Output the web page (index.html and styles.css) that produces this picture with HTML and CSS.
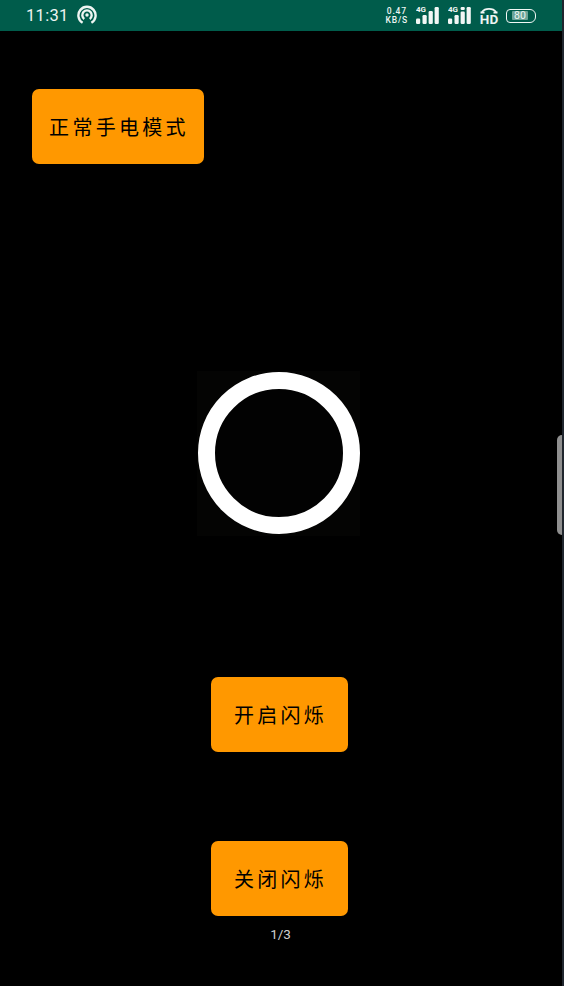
FILE: index.html
```html
<!DOCTYPE html>
<html lang="zh">
<head>
<meta charset="utf-8">
<title>手电</title>
<link rel="stylesheet" href="styles.css">
</head>
<body>
<div class="screen">
  <header class="status">
    <div class="status-left">
      <span class="time">11:31</span>
      <svg class="hotspot" width="20" height="20" viewBox="0 0 20 20" fill="none" stroke="#eef5f2" stroke-width="2.400">
        <path d="M5.600 17.800A8.600 8.600 0 1 1 14.400 17.800"/>
        <path d="M7.300 13.900A4.700 4.700 0 1 1 12.700 13.900"/>
        <circle cx="10" cy="10" r="1.700" fill="#eef5f2" stroke="none"/>
      </svg>
    </div>
    <div class="status-right">
      <div class="speed"><span>0.47</span><span>KB/S</span></div>
      <svg class="signal" width="23" height="18" viewBox="0 0 23 18" fill="#f2f7f5">
        <text x="0" y="6" class="net">4G</text>
        <rect x="0" y="12.500" width="4.200" height="5.500" rx="1.200"/>
        <rect x="6.500" y="9" width="4.200" height="9" rx="1.200"/>
        <rect x="12.600" y="5" width="4.200" height="13" rx="1.200"/>
        <rect x="18.600" y="1" width="4.200" height="17" rx="1.200"/>
      </svg>
      <svg class="signal" width="23" height="18" viewBox="0 0 23 18" fill="#f2f7f5">
        <text x="0" y="6" class="net">4G</text>
        <rect x="0" y="12.500" width="4.200" height="5.500" rx="1.200"/>
        <rect x="6.500" y="9" width="4.200" height="9" rx="1.200"/>
        <rect x="12.600" y="1" width="4.200" height="3" rx="1.200"/>
        <rect x="12.600" y="5.500" width="4.200" height="12.500" rx="1.200"/>
        <rect x="18.600" y="1" width="4.200" height="17" rx="1.200"/>
      </svg>
      <div class="hd">
        <svg width="18" height="7" viewBox="0 0 18 7" fill="none" stroke="#f2f7f5" stroke-width="1.800">
          <path d="M2 5C5 .9 13 .9 16 5"/>
          <path d="M.5 4.500h4v2h-4zM13.500 4.500h4v2h-4z" fill="#f2f7f5" stroke="none"/>
        </svg>
        <span>HD</span>
      </div>
      <div class="battery"><span class="level">80</span></div>
    </div>
  </header>
  <main class="content">
    <button class="action action-mode">正常手电模式</button>
    <div class="lamp"><div class="ring"></div></div>
    <button class="action action-on">开启闪烁</button>
    <button class="action action-off">关闭闪烁</button>
    <p class="pager">1/3</p>
  </main>
  <div class="edge-handle"></div>
</div>
</body>
</html>
```
FILE: styles.css
```css
* { box-sizing: border-box; }
html, body { margin: 0; padding: 0; background: #000; }
.screen {
  position: relative;
  width: 564px;
  height: 986px;
  overflow: hidden;
  background: #000;
  border-right: 2px solid #20262e;
  font-family: "Noto Sans CJK SC", "Noto Sans", sans-serif;
}
.status {
  height: 31px;
  background: #005c4b;
  color: #eef5f2;
  display: flex;
  justify-content: space-between;
  align-items: center;
  padding: 0 26px 0 26px;
}
.status-left { display: flex; align-items: center; gap: 9px; }
.time {
  font-family: Roboto, sans-serif;
  font-size: 16.500px;
  letter-spacing: 0.300px;
  line-height: 20px;
}
.hotspot { display: block; margin-top: -1px; margin-left: -1px; }
.status-right { display: flex; align-items: center; gap: 9px; }
.speed {
  display: flex;
  flex-direction: column;
  align-items: center;
  font-family: Roboto, sans-serif;
  font-weight: 500;
  font-size: 8.500px;
  line-height: 8.500px;
  letter-spacing: 0.800px;
  margin-right: -1px;
  margin-top: 0;
}
.signal { display: block; margin-top: -1px; }
.net { font-family: Roboto, sans-serif; font-size: 8px; font-weight: 700; }
.hd {
  width: 18px;
  display: flex;
  flex-direction: column;
  align-items: center;
  font-family: Roboto, sans-serif;
  font-weight: 700;
  font-size: 13.500px;
  line-height: 10px;
  margin: -1px 0 0 0;
}
.hd svg { display: block; }
.battery {
  width: 30px;
  height: 14px;
  margin-left: -1px;
  border: 1.300px solid #f2f7f5;
  border-radius: 4px 6px 6px 4px;
  padding: 1.500px 7px 1.500px 5px;
  display: flex;
}
.level {
  width: 16px;
  background: #6ba498;
  border-radius: 1px;
  font-family: Roboto, sans-serif;
  font-size: 10.500px;
  line-height: 9px;
  text-align: center;
  color: #eef5f2;
}
.content { padding-left: 32px; }
.action {
  display: block;
  border: 0;
  padding: 0 0 0 2px;
  background: #ff9800;
  color: #000;
  border-radius: 7px;
  font-family: "Noto Sans CJK SC", sans-serif;
  font-weight: 400;
  font-size: 20px;
  line-height: 1;
  letter-spacing: 3.300px;
}
.action-mode { width: 172px; height: 75px; margin-top: 58px; }
.lamp {
  width: 163px;
  height: 165px;
  margin: 207px 0 0 165px;
  padding-top: 1px;
  background: #040403;
  display: flex;
  justify-content: center;
  align-items: flex-start;
}
.ring {
  width: 162px;
  height: 162px;
  border: 17px solid #fff;
  border-radius: 50%;
  background: #020202;
}
.action-on, .action-off { width: 137px; margin-left: 179px; }
.action-on { height: 75px; margin-top: 141px; }
.action-off { height: 75px; margin-top: 89px; }
.pager {
  width: 137px;
  margin: 10px 0 0 180px;
  font-family: Roboto, sans-serif;
  font-size: 13.500px;
  line-height: 16px;
  text-align: center;
  color: #d0d0d0;
}
.edge-handle {
  position: absolute;
  right: 0;
  top: 435px;
  width: 5px;
  height: 100px;
  background: #8f8f8f;
  border-radius: 5px 0 0 5px;
}
```
